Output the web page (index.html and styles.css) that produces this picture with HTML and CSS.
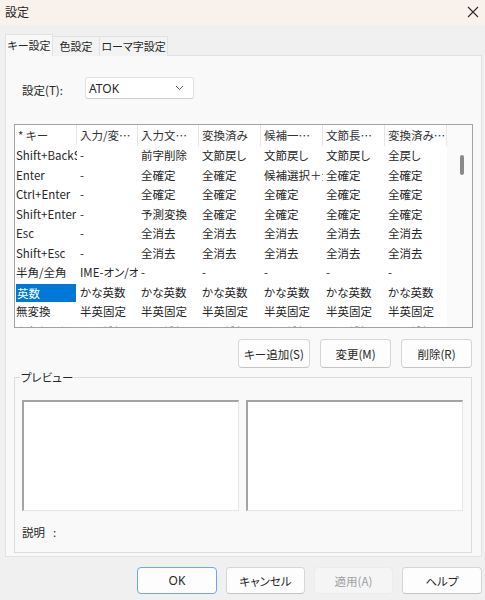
FILE: index.html
```html
<!DOCTYPE html>
<html lang="ja">
<head>
<meta charset="utf-8">
<title>設定</title>
<link rel="stylesheet" href="styles.css">
</head>
<body>
<div class="window">
  <div class="titlebar">
    <span class="title">設定</span>
    <svg class="close" width="12" height="12" viewBox="0 0 12 12"><path d="M1 1 L11 11 M11 1 L1 11" stroke="#2b2b2b" stroke-width="1.1" fill="none"/></svg>
  </div>
  <div class="tabs">
    <div class="tab active">キー設定</div>
    <div class="tab">色設定</div>
    <div class="tab">ローマ字設定</div>
  </div>
  <div class="panel">
    <div class="setrow">
      <span class="label">設定(T):</span>
      <div class="combo"><span>ATOK</span><svg width="9" height="6" viewBox="0 0 9 6"><path d="M1 1 L4.5 4.5 L8 1" stroke="#555" stroke-width="1" fill="none"/></svg></div>
    </div>
    <div class="list">
      <div class="grid">
        <div class="row head">
          <div class="c">* キー</div><div class="c">入力/変…</div><div class="c">入力文…</div><div class="c">変換済み</div><div class="c">候補一…</div><div class="c">文節長…</div><div class="c">変換済み…</div>
        </div>
        <div class="row">
          <div class="c">Shift+BackSpace</div><div class="c">-</div><div class="c">前字削除</div><div class="c">文節戻し</div><div class="c">文節戻し</div><div class="c">文節戻し</div><div class="c">全戻し</div>
        </div>
        <div class="row">
          <div class="c">Enter</div><div class="c">-</div><div class="c">全確定</div><div class="c">全確定</div><div class="c">候補選択＋全確定</div><div class="c">全確定</div><div class="c">全確定</div>
        </div>
        <div class="row">
          <div class="c">Ctrl+Enter</div><div class="c">-</div><div class="c">全確定</div><div class="c">全確定</div><div class="c">全確定</div><div class="c">全確定</div><div class="c">全確定</div>
        </div>
        <div class="row">
          <div class="c">Shift+Enter</div><div class="c">-</div><div class="c">予測変換</div><div class="c">全確定</div><div class="c">全確定</div><div class="c">全確定</div><div class="c">全確定</div>
        </div>
        <div class="row">
          <div class="c">Esc</div><div class="c">-</div><div class="c">全消去</div><div class="c">全消去</div><div class="c">全消去</div><div class="c">全消去</div><div class="c">全消去</div>
        </div>
        <div class="row">
          <div class="c">Shift+Esc</div><div class="c">-</div><div class="c">全消去</div><div class="c">全消去</div><div class="c">全消去</div><div class="c">全消去</div><div class="c">全消去</div>
        </div>
        <div class="row">
          <div class="c">半角/全角</div><div class="c">IME-オン/オフ</div><div class="c">-</div><div class="c">-</div><div class="c">-</div><div class="c">-</div><div class="c">-</div>
        </div>
        <div class="row">
          <div class="c"><span class="sel">英数</span></div><div class="c">かな英数</div><div class="c">かな英数</div><div class="c">かな英数</div><div class="c">かな英数</div><div class="c">かな英数</div><div class="c">かな英数</div>
        </div>
        <div class="row">
          <div class="c">無変換</div><div class="c">半英固定</div><div class="c">半英固定</div><div class="c">半英固定</div><div class="c">半英固定</div><div class="c">半英固定</div><div class="c">半英固定</div>
        </div>
        <div class="row">
          <div class="c">カタカナ/ひらがな</div><div class="c">ひらがな</div><div class="c">ひらがな</div><div class="c">ひらがな</div><div class="c">ひらがな</div><div class="c">ひらがな</div><div class="c">ひらがな</div>
        </div>
      </div>
      <div class="scroll"><div class="thumb"></div></div>
    </div>
    <div class="actions">
      <button class="btn w72">キー追加(S)</button>
      <button class="btn w71">変更(M)</button>
      <button class="btn w71">削除(R)</button>
    </div>
    <fieldset class="group">
      <legend>プレビュー</legend>
      <div class="previews">
        <div class="pbox"></div>
        <div class="pbox"></div>
      </div>
      <div class="desc">説明<span class="colon">:</span></div>
    </fieldset>
  </div>
  <div class="footer">
    <button class="btn fb ok">OK</button>
    <button class="btn fb">キャンセル</button>
    <button class="btn fb disabled">適用(A)</button>
    <button class="btn fb">ヘルプ</button>
  </div>
</div>
</body>
</html>
```
FILE: styles.css
```css
* { box-sizing: border-box; }
html, body { margin: 0; padding: 0; }
body {
  width: 485px;
  height: 600px;
  overflow: hidden;
  background: #f0f0f0;
  font-family: "Noto Sans CJK JP", "Noto Sans", sans-serif;
  font-size: 11.5px;
  color: #262626;
  font-feature-settings: "palt";
}
.window { width: 485px; height: 600px; }
.titlebar {
  height: 25px;
  background: #f9f1ec;
  display: flex;
  align-items: center;
  justify-content: space-between;
  padding: 0 6px 2px 5px;
}
.title { font-size: 12px; line-height: 14px; }
.close { display: block; margin-top: 1px; }
.tabs {
  margin-top: 9px;
  height: 21px;
  padding-left: 5px;
  display: flex;
  align-items: flex-end;
}
.tab {
  height: 20px;
  line-height: 19px;
  padding: 0;
  text-align: center;
  white-space: nowrap;
  font-size: 11px;
  border: 1px solid #e2e2e2;
  border-bottom: none;
  border-left: none;
  background: #f3f3f3;
  position: relative;
  top: 1px;
}
.tab.active {
  height: 22px;
  width: 48px;
  border-left: 1px solid #e2e2e2;
  background: #f9f9f9;
  line-height: 21px;
  z-index: 1;
}
.tab:nth-child(2) { width: 47px; }
.tab:nth-child(3) { width: 68px; }
.panel {
  margin-left: 5px;
  width: 477px;
  height: 502px;
  background: #f9f9f9;
  border: 1px solid #e2e2e2;
}
.setrow {
  margin-top: 21px;
  padding-left: 16px;
  display: flex;
  align-items: center;
}
.label { width: 63px; font-size: 11.5px; margin-top: 3px; }
.combo {
  width: 109px;
  height: 22px;
  background: #ffffff;
  border: 1px solid #e3e3e3;
  border-bottom-color: #cfcfcf;
  border-radius: 3px;
  display: flex;
  align-items: center;
  justify-content: space-between;
  padding: 0 9px 0 3px;
  font-family: "Noto Sans", "Noto Sans CJK JP", sans-serif;
  font-size: 12px;
}
.list {
  margin: 25px 0 0 8px;
  width: 459px;
  height: 204px;
  border: 1px solid #a3a3a3;
  background: #ffffff;
  display: flex;
  overflow: hidden;
}
.grid { width: 432px; flex: none; }
.row {
  display: grid;
  grid-template-columns: 62px 61px 61px 62px 62px 62px 62px;
  height: 19.5px;
}
.row.head { height: 21px; }
.c {
  white-space: nowrap;
  overflow: hidden;
  padding-left: 3px;
  line-height: 19.5px;
}
.row .c:first-child { padding-left: 1px; }
.head .c {
  line-height: 21px;
  border-right: 1px solid #e6e6e6;
  color: #333;
  padding-left: 3px;
}
.head .c:first-child { padding-left: 3px; }
.sel {
  display: block;
  width: 60px;
  height: 19px;
  margin-top: 1px;
  line-height: 18px;
  background: #0078d7;
  color: #ffffff;
  padding-left: 1px;
}
.scroll {
  width: 25px;
  flex: none;
  background: #fafafa;
  padding: 30px 0 0 13px;
}
.thumb {
  width: 4px;
  height: 20px;
  background: #8a8a8a;
  border-radius: 2px;
}
.actions {
  margin-top: 11px;
  display: flex;
  justify-content: flex-end;
  gap: 10px;
  padding-right: 9px;
}
.btn {
  height: 29px;
  background: #fdfdfd;
  border: 1px solid #d6d6d6;
  border-bottom-color: #c4c4c4;
  border-radius: 4px;
  font-family: "Noto Sans CJK JP", "Noto Sans", sans-serif;
  font-feature-settings: "palt";
  font-size: 11.5px;
  color: #262626;
  padding: 0;
}
.w72 { width: 72px; }
.w71 { width: 71px; }
.group {
  margin: 3px 0 0 8px;
  width: 458px;
  height: 182px;
  border: 1px solid #dcdcdc;
  padding: 0 0 0 7px;
  min-width: 0;
}
.group legend {
  margin-left: -2px;
  padding: 0 1px;
  font-size: 11.5px;
  line-height: 12px;
}
.previews {
  margin-top: 17px;
  display: flex;
  gap: 7px;
}
.pbox {
  width: 217px;
  height: 111px;
  background: #ffffff;
  border-top: 2px solid #a3a3a3;
  border-left: 2px solid #a3a3a3;
  border-right: 1px solid #e6e6e6;
  border-bottom: 1px solid #e6e6e6;
}
.desc {
  margin-top: 14px;
  line-height: 14px;
  font-size: 11.5px;
}
.colon { margin-left: 8px; }
.footer {
  margin-top: 10px;
  display: flex;
  justify-content: flex-end;
  gap: 9px;
  padding-right: 3px;
}
.fb { width: 79px; height: 27px; }
.fb:first-child, .fb:last-child { width: 80px; }
.ok { border: 1px solid #6aaae8; border-radius: 4px; }
.ok { font-family: "Noto Sans", "Noto Sans CJK JP", sans-serif; font-size: 12px; }
.disabled {
  background: #f5f5f5;
  border-color: #ececec;
  color: #a0a0a0;
}
```
